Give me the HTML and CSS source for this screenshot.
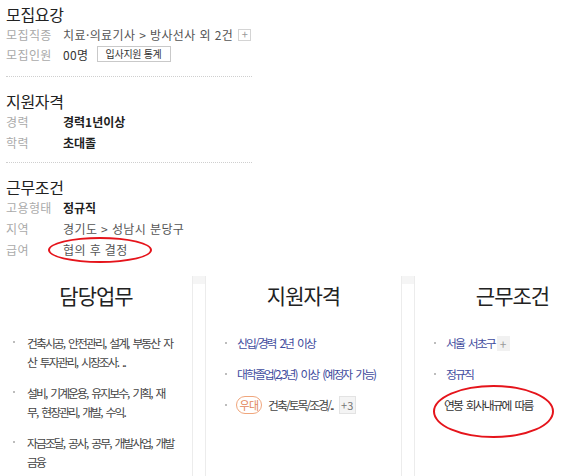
FILE: index.html
```html
<!DOCTYPE html>
<html lang="ko">
<head>
<meta charset="utf-8">
<title>채용 정보</title>
<link rel="stylesheet" href="styles.css">
</head>
<body>
<div class="page">
  <div class="summary">
    <section class="sec sec-first">
      <h2 class="sec-title">모집요강</h2>
      <div class="row"><span class="lbl">모집직종</span><span class="val">치료·의료기사 &gt; 방사선사 외 2건</span><span class="plus-box">+</span></div>
      <div class="row row-short"><span class="lbl">모집인원</span><span class="val val-dark">00명</span><button class="stat-btn" type="button">입사지원 통계</button></div>
    </section>
    <section class="sec">
      <h2 class="sec-title">지원자격</h2>
      <div class="row"><span class="lbl">경력</span><span class="val val-strong">경력1년이상</span></div>
      <div class="row"><span class="lbl">학력</span><span class="val val-strong">초대졸</span></div>
    </section>
    <section class="sec sec-last">
      <h2 class="sec-title">근무조건</h2>
      <div class="row"><span class="lbl">고용형태</span><span class="val val-strong">정규직</span></div>
      <div class="row"><span class="lbl">지역</span><span class="val">경기도 &gt; 성남시 분당구</span></div>
      <div class="row"><span class="lbl">급여</span><span class="val">협의 후 결정</span></div>
    </section>
  </div>

  <div class="cols">
    <div class="col col-a">
      <h3 class="col-title">담당업무</h3>
      <ul class="items">
        <li class="item">건축시공, 안전관리, 설계, 부동산 자<br>산 투자관리, 시장조사. ..</li>
        <li class="item">설비, 기계운용, 유지보수, 기획, 재<br>무, 현장관리, 개발, 수익.</li>
        <li class="item">자금조달, 공사, 공무, 개발사업, 개발<br>금융</li>
      </ul>
    </div>
    <div class="gutter"></div>
    <div class="col col-b">
      <h3 class="col-title">지원자격</h3>
      <ul class="items">
        <li class="item link">신입/경력 2년 이상</li>
        <li class="item link">대학졸업(2,3년) 이상 (예정자 가능)</li>
        <li class="item"><span class="badge">우대</span>건축/토목/조경/..<span class="more">+3</span></li>
      </ul>
    </div>
    <div class="gutter"></div>
    <div class="col col-c">
      <h3 class="col-title">근무조건</h3>
      <ul class="items">
        <li class="item link">서울 서초구<span class="plus-soft">+</span></li>
        <li class="item link">정규직</li>
        <li class="item no-dot">연봉 회사내규에 따름</li>
      </ul>
    </div>
  </div>

  <div class="mark mark-salary"></div>
  <div class="mark mark-pay"></div>
</div>
</body>
</html>
```

FILE: styles.css
```css
* { box-sizing: border-box; }

body {
  margin: 0;
  background: #fff;
  color: #333;
  font-family: "Noto Sans CJK KR", "Noto Sans", sans-serif;
}

.page {
  position: relative;
  width: 564px;
  height: 476px;
  overflow: hidden;
}

/* ---------- top summary ---------- */
.summary {
  width: 246px;
  margin-left: 6px;
}

.sec {
  padding: 14px 0 9px;
  border-bottom: 1px dotted #cfcfcf;
}

.sec-first {
  padding-top: 4px;
  padding-bottom: 13px;
}

.sec-last {
  border-bottom: 0;
  padding-bottom: 0;
}

.sec-title {
  margin: 0;
  font-size: 16px;
  font-weight: 400;
  line-height: 20px;
  letter-spacing: -0.3px;
  color: #222;
}

.row {
  display: flex;
  align-items: center;
  height: 21px;
  font-size: 12px;
  letter-spacing: 0.4px;
  white-space: nowrap;
}

.row-short { height: 18px; }

.lbl {
  flex: none;
  width: 57px;
  color: #aaa;
}

.val { color: #555; }
.val-dark { color: #333; }

.val-strong {
  color: #222;
  font-weight: 700;
  letter-spacing: 0;
}

.plus-box {
  display: inline-flex;
  align-items: center;
  justify-content: center;
  width: 13px;
  height: 12px;
  margin-left: 5px;
  border: 1px solid #d4d4d4;
  color: #999;
  font-size: 11px;
  line-height: 1;
  letter-spacing: 0;
}

.stat-btn {
  height: 16px;
  width: 74px;
  margin-left: 8px;
  padding: 0;
  border: 1px solid #c9c9c9;
  background: #fff;
  color: #333;
  font-family: inherit;
  font-size: 10px;
  line-height: 14px;
  letter-spacing: -0.3px;
}

/* ---------- three columns ---------- */
.cols {
  display: grid;
  grid-template-columns: 192px 14px 195px 14px 195px;
  height: 200px;
  margin-top: 16px;
}

.gutter {
  border-left: 1px solid #ececec;
  border-right: 1px solid #ececec;
  background: linear-gradient(#f5f5f5, #f5f5f5) top / 100% 8px no-repeat;
}

.col-title {
  margin: 0;
  padding-top: 5px;
  font-size: 21px;
  font-weight: 400;
  line-height: 28px;
  letter-spacing: -1px;
  text-align: center;
  color: #222;
}

.items {
  list-style: none;
  margin: 25px 0 0;
  padding: 0 0 0 31px;
}

.col-a .items {
  margin-top: 24px;
  padding-left: 27px;
}

.item {
  position: relative;
  margin-bottom: 13px;
  font-size: 11.8px;
  line-height: 18px;
  letter-spacing: -1.9px;
  word-spacing: 2.5px;
  white-space: nowrap;
  color: #444;
}

.col-a .item {
  margin-bottom: 12px;
  line-height: 19px;
}

.item::before {
  content: "";
  position: absolute;
  left: -12px;
  top: 8px;
  width: 2px;
  height: 2px;
  background: #bdbdbd;
}

.col-a .item::before { left: -14px; }

.item.no-dot::before { display: none; }
.item.no-dot { margin-left: -2px; color: #333; }

.link { color: #3f4c9e; }

.badge {
  display: inline-flex;
  align-items: center;
  justify-content: center;
  width: 26px;
  height: 18px;
  margin-left: -1px;
  margin-right: 6px;
  border: 1px solid #f0a67c;
  border-radius: 9px;
  color: #e2875b;
  font-size: 11px;
  letter-spacing: -0.5px;
  vertical-align: top;
}

.more {
  display: inline-flex;
  align-items: center;
  justify-content: center;
  width: 17px;
  height: 18px;
  margin-left: 6px;
  border: 1px solid #e3e3e3;
  background: #f4f4f4;
  color: #777;
  font-size: 11px;
  letter-spacing: 0;
  vertical-align: top;
}

.plus-soft {
  display: inline-flex;
  align-items: center;
  justify-content: center;
  width: 13px;
  height: 15px;
  margin-top: 2px;
  margin-left: 2px;
  background: #f1f1f1;
  color: #999;
  font-size: 12px;
  letter-spacing: 0;
  vertical-align: top;
}

/* ---------- red hand-drawn marks ---------- */
.mark {
  position: absolute;
  border: 2px solid #e5141b;
  border-radius: 50%;
}

.mark-salary {
  left: 48px;
  top: 237px;
  width: 104px;
  height: 26px;
}

.mark-pay {
  left: 433px;
  top: 385px;
  width: 121px;
  height: 53px;
}
```
